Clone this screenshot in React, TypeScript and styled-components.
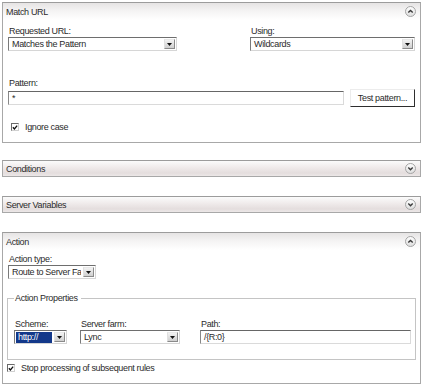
import React from 'react';
import styled, { createGlobalStyle } from 'styled-components';

const GlobalStyle = createGlobalStyle`
    body {
        margin: 0;
        background: #ffffff;
        font-family: 'Liberation Sans', Arial, sans-serif;
        font-size: 9px;
        letter-spacing: -0.35px;
        color: #2b2b2b;
    }
`;

const ToggleIcon: React.FC<{ open: boolean }> = ({ open }) => (
    <svg width="11" height="11" viewBox="0 0 11 11">
        <defs>
            <linearGradient id={open ? 'tg-open' : 'tg-closed'} x1="0" y1="0" x2="0" y2="1">
                <stop offset="0" stopColor="#ffffff" />
                <stop offset="1" stopColor="#dcdcdc" />
            </linearGradient>
        </defs>
        <circle cx="5.5" cy="5.5" r="5" fill={`url(#${open ? 'tg-open' : 'tg-closed'})`} stroke="#a4a4a4" />
        <path
            d={open ? 'M3.3 6.6 L5.5 4.4 L7.7 6.6' : 'M3.3 4.6 L5.5 6.8 L7.7 4.6'}
            fill="none"
            stroke="#3a3a3a"
            strokeWidth="1.4"
        />
    </svg>
);

const Select: React.FC<{ value: string; width?: number; selected?: boolean }> = ({ value, width, selected }) => (
    <SelectBox $width={width}>
        <SelectText $selected={selected}>{value}</SelectText>
        <DropButton>
            <svg width="5" height="3" viewBox="0 0 5 3">
                <path d="M0 0 H5 L2.5 3 Z" fill="#111" />
            </svg>
        </DropButton>
    </SelectBox>
);

const CheckMark: React.FC = () => (
    <CheckBox>
        <svg width="7" height="7" viewBox="0 0 7 7">
            <path d="M1 3.2 L2.8 5.2 L6 1.2" fill="none" stroke="#111" strokeWidth="1.5" />
        </svg>
    </CheckBox>
);

const App: React.FC = () => {
    return (
        <>
            <GlobalStyle />
            <Page>
                <Panel $gap={0}>
                    <PanelHeader $open>
                        <HeaderTitle>Match URL</HeaderTitle>
                        <ToggleIcon open />
                    </PanelHeader>
                    <PanelBody $bottom={9}>
                        <TopGrid>
                            <Field>
                                <FieldLabel>Requested URL:</FieldLabel>
                                <Select value="Matches the Pattern" />
                            </Field>
                            <span />
                            <Field>
                                <FieldLabel>Using:</FieldLabel>
                                <Select value="Wildcards" />
                            </Field>
                        </TopGrid>
                        <PatternLabel>Pattern:</PatternLabel>
                        <PatternRow>
                            <TextBox>*</TextBox>
                            <PushButton type="button">Test pattern...</PushButton>
                        </PatternRow>
                        <CheckRow $top={14} $left={3}>
                            <CheckMark />
                            <span>Ignore case</span>
                        </CheckRow>
                    </PanelBody>
                </Panel>

                <Panel $gap={17}>
                    <PanelHeader>
                        <HeaderTitle>Conditions</HeaderTitle>
                        <ToggleIcon open={false} />
                    </PanelHeader>
                </Panel>

                <Panel $gap={19}>
                    <PanelHeader>
                        <HeaderTitle>Server Variables</HeaderTitle>
                        <ToggleIcon open={false} />
                    </PanelHeader>
                </Panel>

                <Panel $gap={19}>
                    <PanelHeader $open>
                        <HeaderTitle>Action</HeaderTitle>
                        <ToggleIcon open />
                    </PanelHeader>
                    <PanelBody $bottom={9}>
                        <ActionTypeLabel>Action type:</ActionTypeLabel>
                        <Select value="Route to Server Farm" width={88} />
                        <Properties>
                            <Legend>Action Properties</Legend>
                            <PropGrid>
                                <Field>
                                    <FieldLabel>Scheme:</FieldLabel>
                                    <Select value="http://" selected />
                                </Field>
                                <Field>
                                    <FieldLabel>Server farm:</FieldLabel>
                                    <Select value="Lync" />
                                </Field>
                                <Field>
                                    <FieldLabel>Path:</FieldLabel>
                                    <TextBox>/{'{'}R:0{'}'}</TextBox>
                                </Field>
                            </PropGrid>
                        </Properties>
                        <CheckRow $top={2} $left={-1}>
                            <CheckMark />
                            <span>Stop processing of subsequent rules</span>
                        </CheckRow>
                    </PanelBody>
                </Panel>
            </Page>
        </>
    );
};

const Page = styled.div`
    width: 424px;
    box-sizing: border-box;
    padding: 2px 3px 0 2px;
    display: flex;
    flex-direction: column;
`;

const Panel = styled.section<{ $gap: number }>`
    margin-top: ${(props) => props.$gap}px;
    border: 1px solid #a8a8a8;
    border-top-color: #9c9c9c;
    background: #ffffff;
`;

const PanelHeader = styled.div<{ $open?: boolean }>`
    height: ${(props) => (props.$open ? 17 : 15)}px;
    display: flex;
    align-items: center;
    justify-content: space-between;
    padding: 0 4px 0 3px;
    background: ${(props) =>
        props.$open
            ? 'linear-gradient(to bottom, #e6e4e4 0%, #f4f3f3 45%, #ffffff 100%)'
            : 'linear-gradient(to bottom, #fbfbfb 0%, #efeaea 45%, #e4dddd 80%, #ece8e8 100%)'};
`;

const HeaderTitle = styled.span`
    line-height: 12px;
    color: #2b2b2b;
`;

const PanelBody = styled.div<{ $bottom: number }>`
    padding: 0 5px ${(props) => props.$bottom}px 5px;
    display: flex;
    flex-direction: column;
    align-items: flex-start;
`;

const TopGrid = styled.div`
    margin-top: 6px;
    width: 100%;
    display: grid;
    grid-template-columns: 169px 1fr 165px;
`;

const Field = styled.div`
    display: flex;
    flex-direction: column;
    min-width: 0;
`;

const FieldLabel = styled.div`
    line-height: 11px;
    height: 11px;
    padding-left: 1px;
`;

const PatternLabel = styled(FieldLabel)`
    margin-top: 27px;
`;

const ActionTypeLabel = styled(FieldLabel)`
    margin-top: 4px;
`;

const SelectBox = styled.div<{ $width?: number }>`
    box-sizing: border-box;
    width: ${(props) => (props.$width ? `${props.$width}px` : '100%')};
    height: 14px;
    display: flex;
    align-items: center;
    background: #ffffff;
    border: 1px solid #d6d6d6;
    border-top-color: #6e6e6e;
    border-left-color: #7a7a7a;
    padding: 0 1px 0 1px;
`;

const SelectText = styled.span<{ $selected?: boolean }>`
    flex: 1;
    min-width: 0;
    overflow: hidden;
    white-space: nowrap;
    line-height: 11px;
    padding: 0 2px;
    margin-right: 2px;
    background: ${(props) => (props.$selected ? '#13388a' : 'transparent')};
    color: ${(props) => (props.$selected ? '#ffffff' : '#2b2b2b')};
`;

const DropButton = styled.span`
    box-sizing: border-box;
    flex: none;
    width: 11px;
    height: 10px;
    display: flex;
    align-items: center;
    justify-content: center;
    background: linear-gradient(to bottom, #f2f2f2, #cfcfcf);
    border: 1px solid #8a8a8a;
    border-top-color: #e8e8e8;
    border-left-color: #e0e0e0;
`;

const PatternRow = styled.div`
    width: 100%;
    height: 18px;
    display: flex;
    align-items: center;
    gap: 6px;
`;

const TextBox = styled.div`
    box-sizing: border-box;
    flex: 1;
    height: 14px;
    line-height: 12px;
    padding: 0 3px;
    background: #ffffff;
    border: 1px solid #dadada;
    border-top-color: #666666;
    border-left-color: #888888;
`;

const PushButton = styled.button`
    box-sizing: border-box;
    flex: none;
    width: 65px;
    height: 18px;
    padding: 0 0 1px 0;
    font: inherit;
    letter-spacing: inherit;
    color: #2b2b2b;
    background: #ffffff;
    border: 1px solid #ececec;
    border-right: 1px solid #2e2e2e;
    border-bottom: 1px solid #2e2e2e;
`;

const CheckRow = styled.label<{ $top: number; $left: number }>`
    margin: ${(props) => props.$top}px 0 0 ${(props) => props.$left}px;
    height: 12px;
    display: flex;
    align-items: center;
    gap: 6px;
`;

const CheckBox = styled.span`
    box-sizing: border-box;
    width: 8px;
    height: 8px;
    display: flex;
    align-items: center;
    justify-content: center;
    background: #ffffff;
    border: 1px solid #d0d0d0;
    border-top-color: #6a6a6a;
    border-left-color: #6a6a6a;
`;

const Properties = styled.fieldset`
    align-self: stretch;
    margin: 14px -1px 0 -1px;
    padding: 15px 4px 15px 6px;
    border: 1px solid #c4c4c4;
    min-width: 0;
`;

const Legend = styled.legend`
    padding: 0 3px 0 1px;
    margin-left: 0;
    line-height: 11px;
`;

const PropGrid = styled.div`
    display: grid;
    grid-template-columns: 53px 100px 1fr;
    column-gap: 13px;
    & > :last-child {
        margin-left: 7px;
    }
`;

export default App;
